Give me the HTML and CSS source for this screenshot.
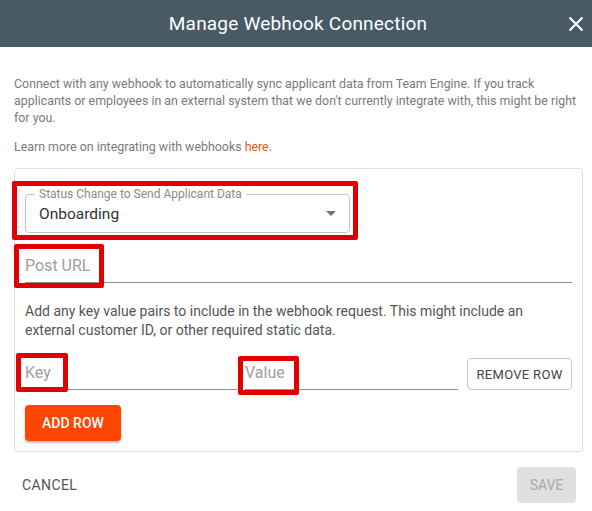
FILE: index.html
```html
<!DOCTYPE html>
<html lang="en">
<head>
    <meta charset="UTF-8">
    <meta name="viewport" content="width=device-width, initial-scale=1.0">
    <title>Manage Webhook Connection</title>
    <link rel="stylesheet" href="styles.css">
</head>
<body>

<div class="dialog">
    <div class="header">
        <h1>Manage Webhook Connection</h1>
        <svg class="close" width="16" height="16" viewBox="0 0 16 16">
            <path d="M1.5 1.5 L14.5 14.5 M14.5 1.5 L1.5 14.5" stroke="#fff" stroke-width="2" fill="none"/>
        </svg>
    </div>

    <div class="content">
        <p class="intro">Connect with any webhook to automatically sync applicant data from Team Engine. If you track applicants or employees in an external system that we don't currently integrate with, this might be right for you.</p>
        <p class="intro learn">Learn more on integrating with webhooks <a href="#">here</a>.</p>

        <div class="card">
            <div class="select marked mark-select">
                <span class="select-label">Status Change to Send Applicant Data</span>
                <span class="select-value">Onboarding</span>
                <span class="caret"></span>
            </div>

            <div class="field url">
                <span class="placeholder marked mark-url">Post URL</span>
            </div>

            <p class="help">Add any key value pairs to include in the webhook request. This might include an external customer ID, or other required static data.</p>

            <div class="pair">
                <div class="field key">
                    <span class="placeholder marked mark-key">Key</span>
                </div>
                <div class="field value">
                    <span class="placeholder marked mark-value">Value</span>
                </div>
                <button class="btn-outline">Remove Row</button>
            </div>

            <button class="btn-add">Add Row</button>
        </div>
    </div>

    <div class="footer">
        <button class="btn-text">Cancel</button>
        <button class="btn-save">Save</button>
    </div>
</div>

</body>
</html>
```

FILE: styles.css
```css
body {
    margin: 0;
    font-family: Roboto, "Liberation Sans", Arial, sans-serif;
    background: #fff;
}
.dialog {
    width: 592px;
    height: 511px;
    display: flex;
    flex-direction: column;
}
.header {
    height: 47px;
    background-color: #475a65;
    color: #fff;
    display: flex;
    align-items: center;
    justify-content: center;
    position: relative;
}
.header h1 {
    margin: 0;
    font-size: 19px;
    font-weight: 400;
    letter-spacing: 0.2px;
    padding-left: 4px;
}
.close {
    position: absolute;
    right: 8px;
    top: 16px;
}
.content {
    padding: 28px 9px 0 14px;
}
.intro {
    margin: 0;
    font-size: 12.4px;
    line-height: 17px;
    color: #7a7a7a;
    margin-right: -4px;
}
.learn {
    margin-top: 12px;
}
.intro a {
    color: #f4511e;
    text-decoration: none;
}
.card {
    margin-top: 13px;
    border: 1px solid #ddd;
    border-radius: 4px;
    padding: 25px 10px 10px 10px;
    display: flex;
    flex-direction: column;
}
.marked {
    position: relative;
}
.marked::after {
    content: "";
    position: absolute;
    border: 5px solid #e00000;
    border-radius: 2px;
}
.select {
    width: 325px;
    height: 39px;
    box-sizing: border-box;
    border: 1px solid #c4c4c4;
    border-radius: 4px;
    padding: 0 13px;
    display: flex;
    align-items: center;
}
.mark-select::after {
    left: -14px;
    right: -9px;
    top: -14px;
    bottom: -8px;
}
.select-label {
    position: absolute;
    top: -8px;
    left: 9px;
    background: #fff;
    padding: 0 4px;
    font-size: 12px;
    line-height: 14px;
    color: #8a8a8a;
}
.select-value {
    font-size: 15.5px;
    color: #333;
    padding-top: 1px;
}
.caret {
    margin-left: auto;
    border-left: 5px solid transparent;
    border-right: 5px solid transparent;
    border-top: 5px solid #757575;
}
.field {
    border-bottom: 1px solid #8e8e8e;
    display: flex;
    align-items: flex-end;
}
.placeholder {
    font-size: 16px;
    color: #9e9e9e;
    padding-bottom: 7px;
}
.url {
    margin-top: 14px;
    height: 35px;
}
.mark-url::after {
    left: -11px;
    right: -14px;
    top: -12px;
    bottom: -6px;
}
.help {
    margin: 19px 0 0 0;
    font-size: 14px;
    line-height: 19px;
    color: #555;
}
.pair {
    margin-top: 15px;
    display: flex;
    align-items: flex-end;
}
.key {
    width: 212px;
    height: 34px;
    flex-shrink: 0;
}
.value {
    width: 213px;
    height: 34px;
    margin-left: 8px;
    flex-shrink: 0;
}
.mark-key::after {
    left: -9px;
    right: -17px;
    top: -10px;
    bottom: -3px;
}
.mark-value::after {
    left: -7px;
    right: -14px;
    top: -7px;
    bottom: -6px;
}
.btn-outline {
    margin-left: auto;
    margin-bottom: 0;
    flex-shrink: 0;
    white-space: nowrap;
    width: 105px;
    height: 32px;
    padding: 0;
    background: #fff;
    border: 1px solid #c4c4c4;
    border-radius: 4px;
    font-family: inherit;
    font-size: 13px;
    text-transform: uppercase;
    color: #444;
    letter-spacing: 0.3px;
}
.btn-add {
    align-self: flex-start;
    margin-top: 15px;
    width: 96px;
    height: 36px;
    background: #ff4500;
    color: #fff;
    border: none;
    border-radius: 4px;
    font-family: inherit;
    font-size: 14px;
    font-weight: 500;
    text-transform: uppercase;
    box-shadow: 0 2px 2px rgba(0, 0, 0, 0.25);
}
.footer {
    display: flex;
    justify-content: space-between;
    align-items: center;
    padding: 15px 16px 0 14px;
}
.btn-text {
    background: none;
    border: none;
    font-family: inherit;
    font-size: 14px;
    text-transform: uppercase;
    color: #555;
    padding: 0 8px;
    letter-spacing: 0.4px;
}
.btn-save {
    width: 59px;
    height: 36px;
    background: #e0e0e0;
    border: none;
    border-radius: 4px;
    font-family: inherit;
    font-size: 14px;
    text-transform: uppercase;
    color: #aaa;
}
```
